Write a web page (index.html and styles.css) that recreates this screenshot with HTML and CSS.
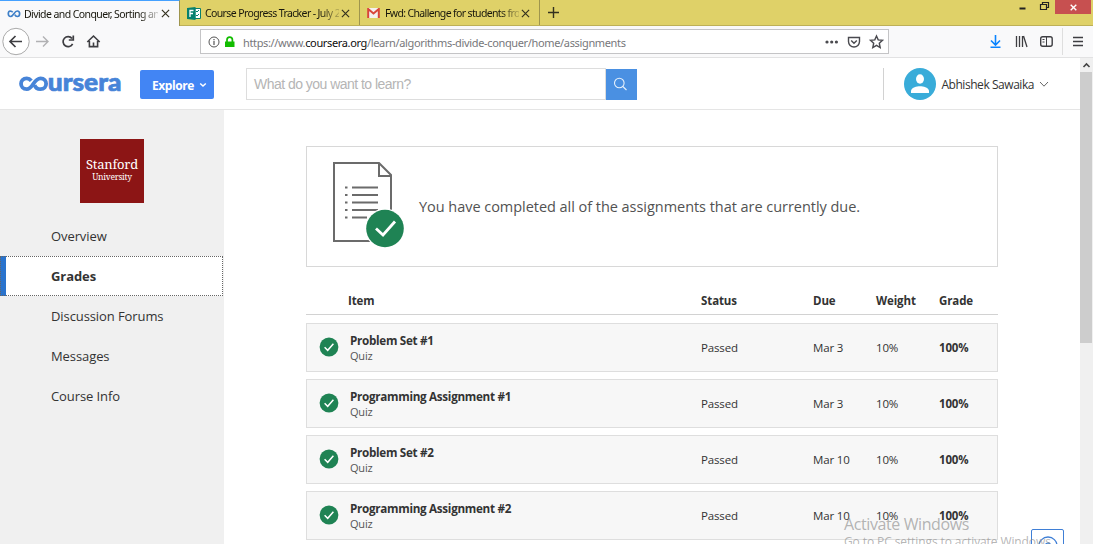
FILE: index.html
```html
<!DOCTYPE html>
<html lang="en">
<head>
<meta charset="utf-8">
<title>Divide and Conquer, Sorting and Searching</title>
<link rel="stylesheet" href="styles.css">
</head>
<body>
<svg class="defs" width="0" height="0">
  <symbol id="check" viewBox="0 0 20 20"><circle cx="10" cy="10" r="9.4" fill="#1f8354"/><path d="M5.6 10.3 8.7 13.3 14.4 6.7" fill="none" stroke="#fff" stroke-width="1.5"/></symbol>
  <symbol id="close" viewBox="0 0 10 10"><path d="M1 1 9 9M9 1 1 9" stroke="#33311f" stroke-width="1.3" fill="none"/></symbol>
</svg>
<div class="tabs">
  <div class="tab active">
    <svg class="fav" width="14" height="10" viewBox="0 0 14 10"><path d="M5.7 3.3C4.800 2 3.900 2 3.300 2 0.500 2.200 0.700 7.500 3.500 7.500 6.600 7.500 7.200 2 10.300 2 13.400 2 13.400 7.500 10.300 7.500 9 7.500 8.200 6.500 7.800 5.600" fill="none" stroke="#3f80c8" stroke-width="1.7"/></svg>
    <span class="tab-text t1">Divide and Conquer, Sorting an</span>
    <svg class="x" width="9" height="9"><use href="#close"/></svg>
  </div>
  <div class="tab second">
    <svg class="fav" width="14" height="13" viewBox="0 0 14 13"><path d="M8 1.500h5.500v10H8z" fill="#fff" stroke="#07806d"/><path d="M9 4l1 1 2-2M9 8l1 1 2-2" stroke="#07806d" fill="none"/><path d="M0 1 8.500 0v13L0 12z" fill="#07806d"/><path d="M3 10V3.500h3.500M3 6.500h3" stroke="#fff" stroke-width="1.3" fill="none"/></svg>
    <span class="tab-text t2">Course Progress Tracker - July 2</span>
    <svg class="x" width="9" height="9"><use href="#close"/></svg>
  </div>
  <div class="tab third">
    <svg class="fav" width="13" height="10" viewBox="0 0 13 10"><path d="M1 0h11v10H1z" fill="#f3f1ef"/><path d="M1.200 10V1L6.500 5.500 11.800 1v9" fill="none" stroke="#d9453b" stroke-width="2"/></svg>
    <span class="tab-text t3">Fwd: Challenge for students fro</span>
    <svg class="x" width="9" height="9"><use href="#close"/></svg>
  </div>
  <svg class="plus" width="11" height="11"><path d="M5.500 0v11M0 5.500h11" stroke="#33311f" stroke-width="1.400"/></svg>
  <div class="window-buttons">
    <svg width="42" height="14"><path d="M4.500 8.500h6" stroke="#222" stroke-width="2"/><path d="M25.500 4.500h6v5h-6zM27.500 4V2.500h6v5H32" fill="none" stroke="#222" stroke-width="1.200"/></svg>
    <div class="win-close"><svg width="7" height="7" viewBox="0 0 10 10"><path d="M1 1 9 9M9 1 1 9" stroke="#fff" stroke-width="2"/></svg></div>
  </div>
</div>
<div class="toolbar">
  <svg class="nav" width="110" height="31" fill="none" stroke="#3e3e42" stroke-width="1.700">
    <circle cx="16" cy="15.500" r="13.200" fill="#fff" stroke="#aaa" stroke-width="1"/>
    <path d="M22 15.500H10.500M15.500 10l-5.500 5.500 5.500 5.500"/>
    <path d="M36 15.500h12M43 10.500l5 5-5 5" stroke="#b1b1b3" stroke-width="1.400"/>
    <path d="M72.600 17.800A5 5 0 1 1 72 12.500M73.300 9.500v4.500h-4.500"/>
    <path d="M87.300 16 93.500 10 99.700 16M89.400 15v5.600h8.200V15M93.500 20.500v-4" stroke-width="1.600"/>
  </svg>
  <div class="address">
    <svg width="30" height="14" fill="none"><circle cx="7" cy="7" r="5" stroke="#555" /><path d="M7 6v4M7 4v1.200" stroke="#555" stroke-width="1.200"/><path d="M18 6.500h9.500V12h-9.500z" fill="#12bc00"/><path d="M20 7V4.800a2.700 2.700 0 0 1 5.400 0V7" stroke="#12bc00" stroke-width="1.700"/></svg>
    <span class="url">https://www.<b>coursera.org</b>/learn/algorithms-divide-conquer/home/assignments</span>
    <svg class="address-icons" width="62" height="16" fill="none" stroke="#4a4a4f" stroke-width="1.400"><g fill="#4a4a4f" stroke="none"><circle cx="3" cy="8" r="1.600"/><circle cx="7.700" cy="8" r="1.600"/><circle cx="12.400" cy="8" r="1.600"/></g><path d="M24.500 3.500h11v4a5.500 5.500 0 0 1-11 0zM27.200 6.500 30 9.200l2.800-2.700"/><path d="m52.500 2 1.700 3.900 4.300.4-3.200 2.900.9 4.300-3.700-2.200-3.700 2.200.9-4.300-3.200-2.900 4.300-.4z"/></svg>
  </div>
  <svg class="tools" width="100" height="31" fill="none" stroke="#3e3e42">
    <path d="M7.500 9v10M3 14.500l4.500 4.500 4.500-4.500M2.500 21.300h10" stroke="#0a84ff" stroke-width="1.600"/>
    <path d="M28.500 10v11M31.500 10v11M34.500 10v11M35.500 10l3.500 11" stroke-width="1.300"/>
    <rect x="52.700" y="10.700" width="11.500" height="9.500" rx="2" stroke-width="1.400"/><path d="M58.500 11v9M54.500 13.500h2M54.500 16h2"/>
    <path d="M74.500 2v27" stroke="#dedede"/>
    <path d="M85 11.500h10M85 15.500h10M85 19.500h10" stroke-width="1.500"/>
  </svg>
</div>
<div class="viewport">
  <div class="page">
    <header class="header">
      <svg class="logo" width="104" height="22" viewBox="0 0 104 22"><path d="M13.300 7.800C12 6.200 10.700 5.400 8.800 5.400 1.100 5.400 1.100 16.200 8.800 16.200 15 16.200 15.500 5.400 22.500 5.400 30 5.400 30 16.200 22.500 16.200 19.300 16.200 17.300 14.500 16.600 12" fill="none" stroke="#4784d8" stroke-width="3.800"/><text x="29.800" y="17.700" textLength="73.500" lengthAdjust="spacingAndGlyphs" class="wordmark">ursera</text></svg>
      <div class="explore">Explore<svg width="8" height="6"><path d="M1.200 1.500 4 4l2.800-2.500" fill="none" stroke="#fff" stroke-width="1.500"/></svg></div>
      <div class="search"><span>What do you want to learn?</span></div>
      <div class="search-button"><svg width="16" height="16" fill="none" stroke="#e6f0fb" stroke-width="1.100"><circle cx="6.300" cy="7" r="4.800"/><path d="M9.800 10.500 13.500 14"/></svg></div>
      <div class="account">
        <svg width="32" height="32"><circle cx="16" cy="16" r="16" fill="#39acd9"/><ellipse cx="16" cy="11" rx="4" ry="4.700" fill="#fff"/><path d="M7 25v-2.500C8 19.500 12.500 18.300 16 18.300s8 1.200 9 4.200V25z" fill="#fff"/></svg>
        <span class="user">Abhishek Sawaika</span>
        <svg width="10" height="8"><path d="M1 2 5 6.200 9 2" fill="none" stroke="#666"/></svg>
      </div>
    </header>
    <div class="body">
      <nav class="sidebar">
        <div class="stanford"><span class="st1">Stanford</span><span class="st2">University</span></div>
        <a class="link"><span>Overview</span></a>
        <a class="link current"><span>Grades</span></a>
        <a class="link"><span>Discussion Forums</span></a>
        <a class="link"><span>Messages</span></a>
        <a class="link"><span>Course Info</span></a>
      </nav>
      <main class="main">
        <section class="notice">
          <svg width="76" height="90" fill="none" stroke="#6b6b6b" stroke-width="2"><path d="M60 52V17L48 5H3v78h42M48 5v13h12"/><path d="M21 29.500h26M21 37h26M21 44.500h26M21 52h26M21 59.500h15"/><path d="M14 29.500h2.500M14 37h2.500M14 44.500h2.500M14 52h2.500M14 59.500h2.500"/><circle cx="54" cy="70.500" r="20" fill="#fff" stroke="none"/><circle cx="54" cy="70.500" r="18.800" fill="#1f8354" stroke="none"/><path d="M45 70.500 52 77l12-13.500" stroke="#fff" stroke-width="2.800"/></svg>
          <span class="message">You have completed all of the assignments that are currently due.</span>
        </section>
        <div class="columns head"><span class="item">Item</span><span>Status</span><span>Due</span><span>Weight</span><span>Grade</span></div>
        <div class="columns row"><svg width="20" height="20"><use href="#check"/></svg><div class="name"><b>Problem Set #1</b><small>Quiz</small></div><span>Passed</span><span>Mar 3</span><span>10%</span><b class="grade">100%</b></div>
        <div class="columns row"><svg width="20" height="20"><use href="#check"/></svg><div class="name"><b>Programming Assignment #1</b><small>Quiz</small></div><span>Passed</span><span>Mar 3</span><span>10%</span><b class="grade">100%</b></div>
        <div class="columns row"><svg width="20" height="20"><use href="#check"/></svg><div class="name"><b>Problem Set #2</b><small>Quiz</small></div><span>Passed</span><span>Mar 10</span><span>10%</span><b class="grade">100%</b></div>
        <div class="columns row"><svg width="20" height="20"><use href="#check"/></svg><div class="name"><b>Programming Assignment #2</b><small>Quiz</small></div><span>Passed</span><span>Mar 10</span><span>10%</span><b class="grade">100%</b></div>
      </main>
    </div>
  </div>
  <div class="scrollbar"><svg width="13" height="14"><path d="M3.500 9 6.500 6l3 3" fill="none" stroke="#444" stroke-width="1.600"/></svg><div class="thumb"></div></div>
</div>
<div class="help"><svg width="20" height="20" fill="none" stroke="#3f7fd6" stroke-width="1.300"><circle cx="10" cy="10" r="9"/><path d="M7.500 9.500a2.500 2.500 0 1 1 3.500 2.300c-1 .5-1 1-1 2"/></svg></div>
<div class="watermark"><div class="w1">Activate Windows</div><div class="w2">Go to PC settings to activate Windows.</div></div>
</body>
</html>
```
FILE: styles.css
```css
* { box-sizing: border-box; }
body { margin: 0; width: 1093px; height: 544px; overflow: hidden; position: relative; background: #fff; color: #333; font-family: "Open Sans", sans-serif; font-size: 12px; }
svg { flex: none; display: block; }
.defs { position: absolute; }
span, b, small { white-space: nowrap; }

.tabs { display: flex; height: 26px; background: #dfd168; border-bottom: 1px solid #bdb057; align-items: flex-start; }
.tab { display: flex; align-items: center; height: 25px; padding: 1px 9px 0 7px; border-right: 1px solid #9f954d; color: #17160c; }
.tab.active { width: 180px; height: 26px; background: #f9f9fa; border-top: 1px solid #45a1ff; padding-top: 0; }
.tab.second { width: 180px; }
.tab.third { width: 180px; }
.tab-text { font-family: "Noto Sans", sans-serif; font-size: 10.5px; letter-spacing: -.58px; width: 134px; margin-left: 3px; overflow: hidden; -webkit-mask-image: linear-gradient(90deg, #000 86%, rgba(0,0,0,.2)); mask-image: linear-gradient(90deg, #000 86%, rgba(0,0,0,.2)); }
.t2 { letter-spacing: -.62px; margin-left: 4px; }
.t3 { letter-spacing: -.64px; margin-left: 5px; }
.tab .x { margin-left: auto; }
.plus { margin: 7px 0 0 8px; }
.window-buttons { display: flex; margin-left: auto; margin-right: 2px; }
.win-close { width: 36px; height: 14px; margin-left: -2px; background: #c75050; display: flex; justify-content: center; align-items: center; }

.toolbar { display: flex; height: 32px; background: #f9f9fa; border-bottom: 1px solid #e2e2e3; }
.address { display: flex; align-items: center; width: 689px; height: 25px; margin: 3px 0 0 90px; padding: 0 5px 0 6px; background: #fff; border: 1px solid #c4c4c6; }
.url { margin-left: 6px; padding-top: 1px; font-family: "Noto Sans", sans-serif; font-size: 11px; letter-spacing: -.35px; color: #77777b; }
.url b { font-weight: 400; color: #0c0c0d; }
.address-icons { margin-left: auto; margin-right: -3px; }
.tools { margin-left: 99px; }

.viewport { display: flex; height: 486px; }
.page { width: 1080px; overflow: hidden; }
.scrollbar { width: 13px; background: #f0f0f0; }
.thumb { width: 12px; height: 271px; background: #cdcdcd; }

.header { display: flex; align-items: center; height: 52px; border-bottom: 1px solid #e5e5e5; padding: 1px 0 0 18px; }
.logo { margin-top: -1px; }
.wordmark { font-family: Lato, sans-serif; font-weight: 900; font-size: 24px; fill: #4784d8; stroke: #4784d8; stroke-width: .7px; }
.explore { display: flex; align-items: center; justify-content: center; gap: 5px; width: 74px; height: 29px; margin-left: 18px; padding: 2px 0 0 5px; border-radius: 2px; background: #4285f4; color: #fff; font-weight: 700; font-size: 12px; letter-spacing: -.4px; }
.search { width: 360px; height: 32px; margin-left: 32px; padding: 7px 7px; border: 1px solid #ddd; font-family: "Liberation Sans", sans-serif; font-size: 14px; line-height: 16px; color: #b5b5b5; letter-spacing: -.53px; }
.search-button { width: 31px; height: 31px; background: #4a90e2; padding: 7px; }
.account { display: flex; align-items: center; height: 32px; margin-left: auto; margin-right: 31px; padding-left: 20px; border-left: 1px solid #d2d2d2; }
.user { margin: 0 5px; padding-top: 1px; font-size: 12px; letter-spacing: -.45px; }

.body { display: flex; height: 434px; }
.sidebar { width: 224px; background: #f0f0f0; padding-top: 29px; }
.stanford { display: flex; flex-direction: column; align-items: center; width: 64px; height: 64px; margin: 0 0 13px 80px; padding-top: 18px; background: #8c1515; color: #fff; font-family: "Noto Serif", "Liberation Serif", serif; }
.st1 { font-size: 13px; line-height: 15px; letter-spacing: -.2px; }
.st2 { font-size: 8.5px; line-height: 9px; letter-spacing: -.25px; }
.link { display: flex; align-items: center; height: 40px; padding-left: 51px; font-size: 13px; letter-spacing: -.09px; }
.link.current { width: 223px; height: 40px; padding-left: 45px; border-left: 6px solid #2a73cc; background: #fff; font-weight: 700; outline: 1px dotted #666; outline-offset: -1px; }

.main { width: 692px; margin: 36px 0 0 82px; }
.notice { display: flex; align-items: center; height: 121px; border: 1px solid #d8d8d8; padding-left: 24px; }
.notice svg { margin-top: -8px; }
.message { margin-left: 12px; font-size: 14.5px; letter-spacing: -.04px; color: #525252; }
.columns { display: grid; grid-template-columns: 395px 112px 63px 63px 1fr; align-items: center; }
.head { height: 48px; padding-top: 20px; border-bottom: 1px solid #d2d2d2; margin-bottom: 8px; font-weight: 700; font-size: 11.5px; letter-spacing: -.1px; }
.head .item { padding-left: 42px; }
.row { grid-template-columns: 31px 351px 112px 63px 63px 1fr; height: 49px; margin-bottom: 7px; padding: 0 0 1px 12px; border: 1px solid #dedede; background: #f7f7f7; font-size: 11.5px; }
.row > span, .row > .grade { padding-top: 1px; letter-spacing: -.15px; }
.name { display: flex; flex-direction: column; padding-top: 2px; }
.name b { line-height: 16px; font-size: 11.7px; letter-spacing: -.3px; }
.name small { line-height: 16px; font-size: 11px; letter-spacing: -.2px; color: #555; }

.help { position: absolute; left: 1031px; top: 529px; width: 33px; height: 30px; border: 1px solid #3f7fd6; border-radius: 2px; background: #fff; padding: 6px; }
.watermark { position: absolute; left: 844px; top: 515px; color: rgba(140,140,140,.65); white-space: nowrap; }
.w1 { font-size: 16px; line-height: 19px; letter-spacing: -.4px; }
.w2 { font-size: 12px; line-height: 16px; letter-spacing: -.1px; }
```
